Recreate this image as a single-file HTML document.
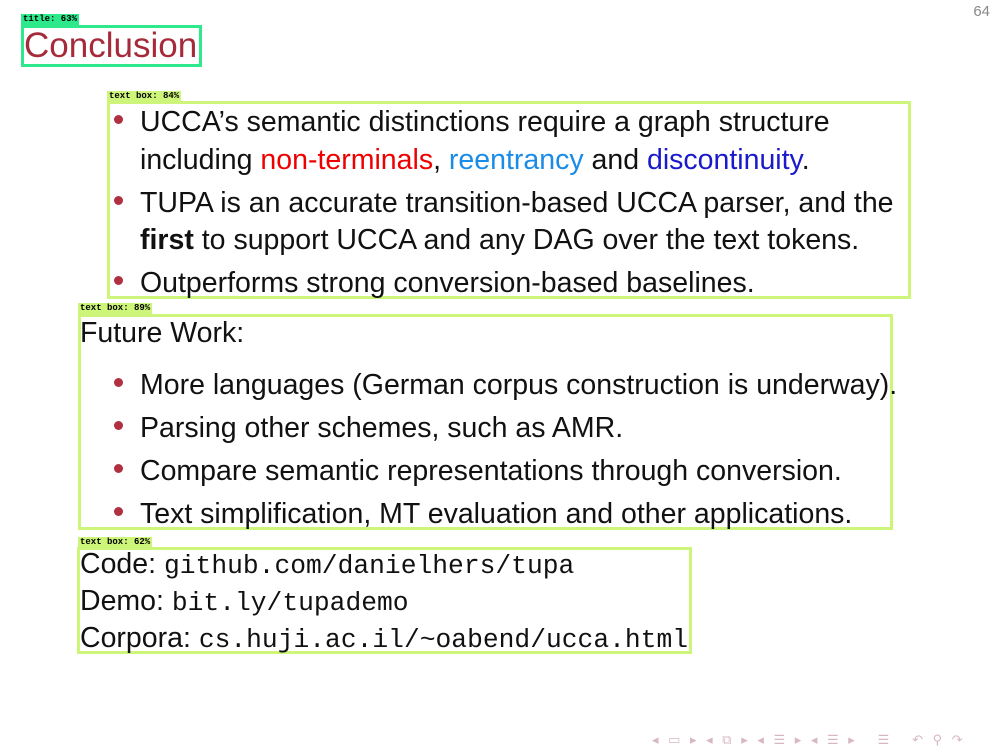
<!DOCTYPE html>
<html><head><meta charset="utf-8"><style>
body{margin:0;width:1008px;height:756px;background:#fff;position:relative;overflow:hidden;font-family:"Liberation Sans",sans-serif;}
.a{position:absolute;white-space:nowrap;}
.t{font-size:28.5px;line-height:30px;color:#111;}
.box{position:absolute;border:3px solid #ccf57a;box-sizing:border-box;}
.lbl{position:absolute;background:#ccf57a;font:bold 9px "Liberation Mono",monospace;color:#000;line-height:11px;padding:0 2px;}
.b{position:absolute;width:9px;height:9px;border-radius:50%;background:#b03040;}
.m{font-family:"Liberation Mono",monospace;font-size:26.3px;}
</style></head><body>
<div class="a" style="right:18px;top:3px;font-size:15px;color:#888">64</div>
<div class="lbl" style="left:21px;top:14px;background:#2ee88c">title: 63%</div>
<div class="box" style="left:21px;top:25px;width:181px;height:42px;border-color:#2ee88c"></div>
<div class="a" style="left:24px;top:26px;font-size:35px;line-height:40px;color:#a52a3a">Conclusion</div>

<div class="lbl" style="left:107px;top:91px">text box: 84%</div>
<div class="box" style="left:107px;top:101px;width:804px;height:198px"></div>
<div class="b" style="left:114px;top:115px"></div>
<div class="a t" style="left:140px;top:107px">UCCA’s semantic distinctions require a graph structure</div>
<div class="a t" style="left:140px;top:145px">including <span style="color:#e00">non-terminals</span>, <span style="color:#1a8ce8">reentrancy</span> and <span style="color:#1a1acc">discontinuity</span>.</div>
<div class="b" style="left:114px;top:196px"></div>
<div class="a t" style="left:140px;top:188px">TUPA is an accurate transition-based UCCA parser, and the</div>
<div class="a t" style="left:140px;top:225px"><b>first</b> to support UCCA and any DAG over the text tokens.</div>
<div class="b" style="left:114px;top:276px"></div>
<div class="a t" style="left:140px;top:268px">Outperforms strong conversion-based baselines.</div>

<div class="lbl" style="left:78px;top:303px">text box: 89%</div>
<div class="box" style="left:78px;top:314px;width:815px;height:216px"></div>
<div class="a t" style="left:80px;top:318px">Future Work:</div>
<div class="b" style="left:114px;top:378px"></div>
<div class="a t" style="left:140px;top:370px">More languages (German corpus construction is underway).</div>
<div class="b" style="left:114px;top:421px"></div>
<div class="a t" style="left:140px;top:413px">Parsing other schemes, such as AMR.</div>
<div class="b" style="left:114px;top:464px"></div>
<div class="a t" style="left:140px;top:456px">Compare semantic representations through conversion.</div>
<div class="b" style="left:114px;top:507px"></div>
<div class="a t" style="left:140px;top:499px">Text simplification, MT evaluation and other applications.</div>

<div class="lbl" style="left:78px;top:537px">text box: 62%</div>
<div class="box" style="left:77px;top:547px;width:615px;height:107px"></div>
<div class="a t" style="left:80px;top:549px">Code: <span class="m">github.com/danielhers/tupa</span></div>
<div class="a t" style="left:80px;top:586px">Demo: <span class="m">bit.ly/tupademo</span></div>
<div class="a t" style="left:80px;top:623px">Corpora: <span class="m">cs.huji.ac.il/~oabend/ucca.html</span></div>

<div class="a" style="left:652px;top:732px;font-size:13px;color:#d8b8c0;letter-spacing:3px">◂ ▭ ▸ ◂ ⧉ ▸ ◂ ☰ ▸ ◂ ☰ ▸ &nbsp; ☰ &nbsp; ↶ ⚲ ↷</div>
</body></html>
